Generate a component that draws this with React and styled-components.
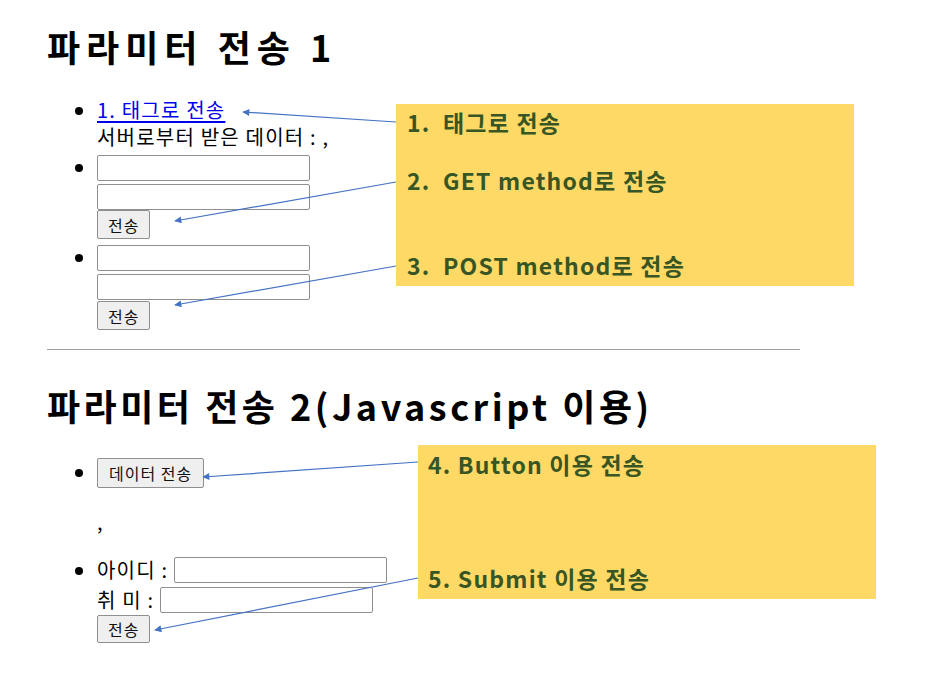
import styled, { createGlobalStyle } from "styled-components";

const GlobalStyle = createGlobalStyle`
  body {
    margin: 0;
    background: #fff;
    color: #000;
    font-family: "Noto Sans CJK KR", "Noto Sans", sans-serif;
  }
`;

const Page = styled.div`
  position: relative;
  width: 945px;
  height: 699px;
  overflow: hidden;
`;

const Content = styled.div`
  width: 753px;
  padding-left: 47px;
  font-size: 20px;
  line-height: 27px;
  letter-spacing: 1.2px;
`;

const Title = styled.h1`
  margin: ${(p) => p.$top}px 0 0;
  font-size: 36px;
  line-height: 44px;
  font-weight: 700;
  letter-spacing: ${(p) => p.$spacing || 0}px;
`;

const List = styled.ul`
  margin: ${(p) => p.$top}px 0 0;
  padding-left: 50px;
  list-style: disc;
`;

const Item = styled.li`
  padding-top: ${(p) => p.$top || 0}px;
`;

const Stack = styled.div`
  display: flex;
  flex-direction: column;
  align-items: flex-start;
`;

const TagLink = styled.a`
  color: #0000ee;
  text-decoration: underline;
  text-underline-offset: 3px;
`;

const Field = styled.input`
  box-sizing: border-box;
  width: 213px;
  height: 26px;
  margin: 0 0 ${(p) => p.$after ?? 3}px;
  padding: 0 4px;
  border: 1px solid #8f8f8f;
  border-radius: 2px;
  background: #fff;
  font: 16px "Noto Sans CJK KR", sans-serif;
`;

const Button = styled.button`
  box-sizing: border-box;
  height: ${(p) => p.$h || 29}px;
  padding: 0 ${(p) => p.$px || 10}px;
  border: 1px solid #8f8f8f;
  border-radius: 2px;
  background: #efefef;
  color: #111;
  font: 16px/1 "Noto Sans CJK KR", sans-serif;
  letter-spacing: 1px;
  cursor: pointer;
`;

const Result = styled.div`
  margin-top: 20px;
  height: 27px;
`;

const Row = styled.label`
  display: flex;
  align-items: center;
  gap: 6px;
  height: 26px;
  margin-bottom: ${(p) => p.$after || 0}px;
  white-space: pre;
`;

const Rule = styled.hr`
  margin: 19px 0 0;
  border: none;
  border-top: 1px solid #a0a0a0;
  height: 0;
`;

const Note = styled.div`
  position: absolute;
  left: ${(p) => p.$x}px;
  top: ${(p) => p.$y}px;
  width: ${(p) => p.$w}px;
  height: ${(p) => p.$h}px;
  box-sizing: border-box;
  padding: ${(p) => p.$pad};
  background: #ffd966;
  color: #375623;
  font-size: 23px;
  line-height: 30px;
  font-weight: 700;
  letter-spacing: 1.2px;
`;

const NoteLine = styled.div`
  margin-top: ${(p) => p.$gap || 0}px;
  white-space: pre;
`;

const Num = styled.span`
  display: inline-block;
  width: ${(p) => p.$w}px;
`;

const Arrows = styled.svg`
  position: absolute;
  left: 0;
  top: 0;
  pointer-events: none;
`;

const arrows = [
  [396, 122, 243, 112],
  [396, 182, 175, 221],
  [396, 266, 175, 305],
  [418, 462, 203, 477],
  [418, 578, 155, 630],
];

export default function App() {
  return (
    <Page>
      <GlobalStyle />
      <Content>
        <Title $top={24} $spacing={6}>
          파라미터 전송 1
        </Title>
        <List $top={28}>
          <Item>
            <TagLink href="#">1. 태그로 전송</TagLink>
            <br />
            서버로부터 받은 데이터 : ,
          </Item>
          <Item $top={3}>
            <Stack>
              <Field />
              <Field $after={0} />
              <Button>전송</Button>
            </Stack>
          </Item>
          <Item $top={4}>
            <Stack>
              <Field />
              <Field $after={1} />
              <Button>전송</Button>
            </Stack>
          </Item>
        </List>
        <Rule />
        <Title $top={33} $spacing={3.5}>
          파라미터 전송 2(Javascript 이용)
        </Title>
        <List $top={31}>
          <Item>
            <Stack>
              <Button $h={30} $px={11}>
                데이터 전송
              </Button>
              <Result>,</Result>
            </Stack>
          </Item>
          <Item $top={21}>
            <Stack>
              <Row $after={4}>
                아이디 :<Field $after={0} />
              </Row>
              <Row $after={2}>
                취 미 :<Field $after={0} />
              </Row>
              <Button $h={28}>전송</Button>
            </Stack>
          </Item>
        </List>
      </Content>

      <Arrows width="945" height="699" viewBox="0 0 945 699">
        <defs>
          <marker
            id="head"
            viewBox="0 0 10 10"
            refX="9"
            refY="5"
            markerWidth="8"
            markerHeight="7"
            markerUnits="userSpaceOnUse"
            orient="auto"
          >
            <path d="M0 0 L10 5 L0 10 z" fill="#4472c4" />
          </marker>
        </defs>
        {arrows.map(([x1, y1, x2, y2], i) => (
          <line
            key={i}
            x1={x1}
            y1={y1}
            x2={x2}
            y2={y2}
            stroke="#4472c4"
            strokeWidth="1.2"
            markerEnd="url(#head)"
          />
        ))}
      </Arrows>

      <Note $x={396} $y={104} $w={458} $h={182} $pad="3px 0 0 11px">
        <NoteLine>
          <Num $w={36}>1.</Num>태그로 전송
        </NoteLine>
        <NoteLine $gap={28}>
          <Num $w={36}>2.</Num>GET method로 전송
        </NoteLine>
        <NoteLine $gap={55}>
          <Num $w={36}>3.</Num>POST method로 전송
        </NoteLine>
      </Note>
      <Note $x={418} $y={445} $w={458} $h={154} $pad="4px 0 0 10px">
        <NoteLine>4. Button 이용 전송</NoteLine>
        <NoteLine $gap={84}>5. Submit 이용 전송</NoteLine>
      </Note>
    </Page>
  );
}
